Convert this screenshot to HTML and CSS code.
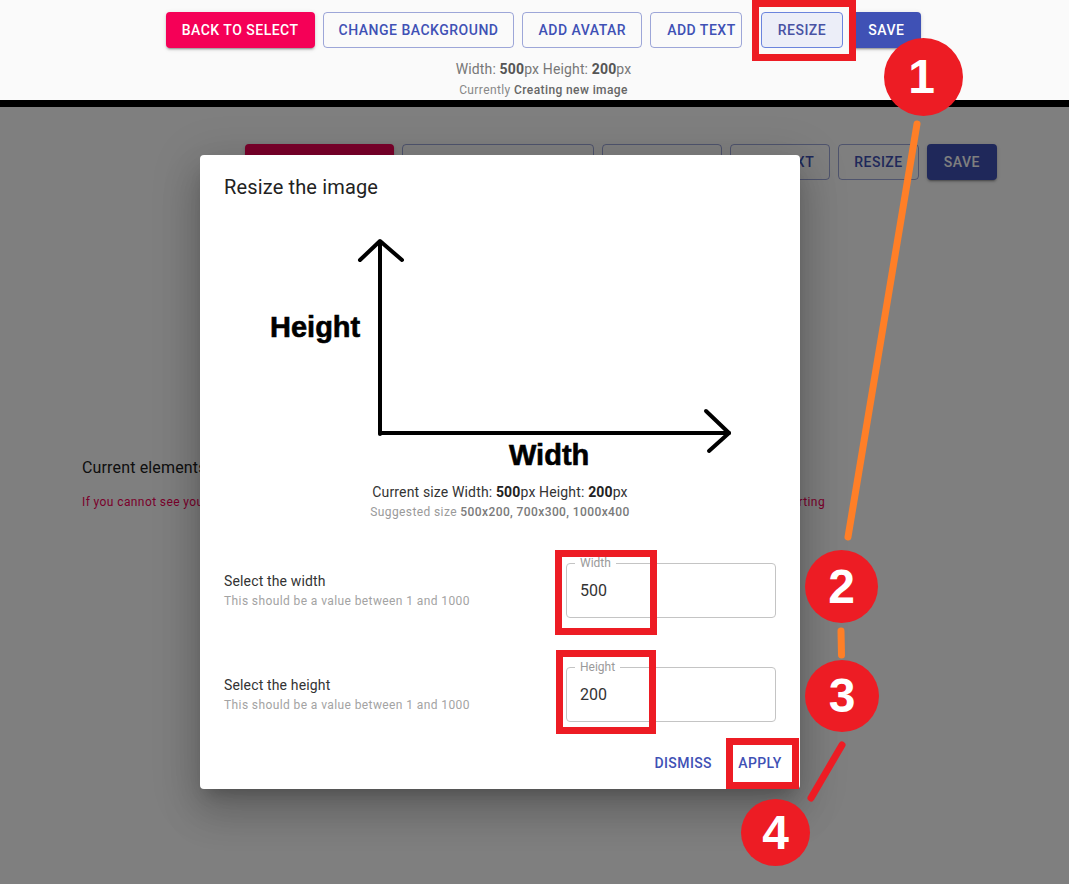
FILE: index.html
```html
<!DOCTYPE html>
<html lang="en">
<head>
<meta charset="utf-8">
<title>Resize the image</title>
<link rel="stylesheet" href="styles.css">
</head>
<body>
<div class="shot">
  <header class="toolbar">
    <div class="btn-row">
      <button class="btn btn-pink">Back to select</button>
      <button class="btn btn-outline">Change background</button>
      <button class="btn btn-outline">Add avatar</button>
      <button class="btn btn-outline btn-tight">Add text</button>
      <button class="btn btn-outline btn-active">Resize</button>
      <button class="btn btn-blue">Save</button>
    </div>
    <div class="dims">Width: <b>500</b>px Height: <b>200</b>px</div>
    <div class="status">Currently <b>Creating new image</b></div>
  </header>
  <div class="divider"></div>

  <section class="scene">
    <div class="page">
      <div class="btn-row page-row">
        <button class="btn btn-pink">Back to select</button>
        <button class="btn btn-outline">Change background</button>
        <button class="btn btn-outline">Add avatar</button>
        <button class="btn btn-outline">Add text</button>
        <button class="btn btn-outline">Resize</button>
        <button class="btn btn-blue">Save</button>
      </div>
      <div class="dims page-text">Width: <b>500</b>px Height: <b>200</b>px</div>
      <div class="status page-text">Currently <b>Creating new image</b></div>
      <div class="elements">
        <h2 class="elements-title">Current elements:</h2>
        <p class="elements-warn">If you cannot see your elements in the preview, they might be placed outside the image. Resize it or move them in before exporting</p>
      </div>
    </div>
    <div class="backdrop"></div>

    <div class="dialog">
      <h1 class="dialog-title">Resize the image</h1>
      <div class="dialog-content">
        <svg class="diagram" width="552" height="263" viewBox="224 219 552 263">
          <g fill="none" stroke="#000" stroke-width="4" stroke-linecap="round" stroke-linejoin="round">
            <path d="M380 434 L380 242"/>
            <path d="M360 260 L380 241 L402 260"/>
            <path d="M380 433 L729 433"/>
            <path d="M706 411 L729 433 L709 451"/>
          </g>
          <text x="270" y="337" class="axis-label">Height</text>
          <text x="509" y="465" class="axis-label">Width</text>
        </svg>
        <p class="size-now">Current size Width: <b>500</b>px Height: <b>200</b>px</p>
        <p class="size-hint">Suggested size <b>500x200, 700x300, 1000x400</b></p>

        <div class="field-row">
          <div class="field-text">
            <div class="field-label">Select the width</div>
            <div class="field-help">This should be a value between 1 and 1000</div>
          </div>
          <div class="field"><span class="field-legend">Width</span><span class="field-value">500</span></div>
        </div>

        <div class="field-row field-row-2">
          <div class="field-text">
            <div class="field-label">Select the height</div>
            <div class="field-help">This should be a value between 1 and 1000</div>
          </div>
          <div class="field"><span class="field-legend">Height</span><span class="field-value">200</span></div>
        </div>
      </div>
      <div class="dialog-actions">
        <button class="text-btn">Dismiss</button>
        <button class="text-btn">Apply</button>
      </div>
    </div>
  </section>

  <svg class="connectors" width="1069" height="884" viewBox="0 0 1069 884">
    <g stroke-width="7" stroke-linecap="round" fill="none">
      <line x1="917" y1="124" x2="848" y2="537" stroke="#ff7f27"/>
      <line x1="841" y1="631" x2="841.5" y2="655" stroke="#ff7f27"/>
      <line x1="842" y1="745" x2="811" y2="798" stroke="#ed1c24"/>
    </g>
  </svg>

  <div class="mark mark-resize"></div>
  <div class="mark mark-width"></div>
  <div class="mark mark-height"></div>
  <div class="mark mark-apply"></div>

  <div class="step step-1">1</div>
  <div class="step step-2">2</div>
  <div class="step step-3">3</div>
  <div class="step step-4">4</div>
</div>
</body>
</html>
```

FILE: styles.css
```css
* { box-sizing: border-box; }
html, body { margin: 0; padding: 0; }
body {
  font-family: Roboto, "Noto Sans", "Liberation Sans", sans-serif;
  background: #808080;
  width: 1069px;
  height: 884px;
  overflow: hidden;
}
.shot {
  position: relative;
  width: 1069px;
  height: 884px;
  overflow: hidden;
}

/* ---------- toolbar ---------- */
.toolbar {
  height: 100px;
  background: #fafafa;
  padding: 12px 0 0 18px;
  text-align: center;
}
.btn-row {
  display: flex;
  justify-content: center;
  gap: 8px;
}
.btn {
  font-family: Roboto, sans-serif;
  font-size: 14px;
  font-weight: 500;
  letter-spacing: 0.5px;
  text-transform: uppercase;
  height: 36px;
  line-height: 24px;
  padding: 6px 16px;
  border-radius: 4px;
  border: 0;
  white-space: nowrap;
}
.btn-pink {
  background: #f50057;
  color: #fff;
  box-shadow: 0 3px 1px -2px rgba(0,0,0,.2), 0 2px 2px 0 rgba(0,0,0,.14), 0 1px 5px 0 rgba(0,0,0,.12);
}
.btn-blue {
  background: #3f51b5;
  color: #fff;
  padding: 6px 17px;
  box-shadow: 0 3px 1px -2px rgba(0,0,0,.2), 0 2px 2px 0 rgba(0,0,0,.14), 0 1px 5px 0 rgba(0,0,0,.12);
}
.btn-outline {
  background: transparent;
  color: #3f51b5;
  border: 1px solid rgba(63,81,181,.5);
  padding: 5px 15px;
}
.btn-tight { padding: 5px 5px 5px 16px; }
.btn-active {
  margin-left: 11px;
  padding: 5px 16px;
  background: #eceef8;
  border-color: #6b84dd;
  color: #4852a4;
}
.dims {
  font-size: 14px;
  line-height: 20px;
  letter-spacing: 0.15px;
  color: #777;
  margin-top: 11px;
}
.dims b { color: #555; font-weight: 700; }
.status {
  font-size: 12px;
  line-height: 18px;
  letter-spacing: 0.4px;
  color: #888;
  margin-top: 2px;
}
.status b { color: #666; font-weight: 500; }
.divider { height: 7px; background: #000; }

/* ---------- background page ---------- */
.scene {
  position: relative;
  height: 777px;
  background: #fff;
}
.page { padding-top: 37px; }
.page-row { padding-left: 173px; gap: 8px; }
.page-text { padding-left: 173px; text-align: center; }
.elements { margin-top: 225px; padding-left: 82px; }
.elements-title {
  margin: 0;
  font-size: 16px;
  line-height: 24px;
  letter-spacing: 0.15px;
  font-weight: 400;
  color: #212121;
}
.elements-warn {
  margin: 13px 0 0;
  font-size: 12px;
  line-height: 18px;
  letter-spacing: 0.4px;
  color: #f50057;
  white-space: nowrap;
}
.backdrop {
  position: absolute;
  inset: 0;
  background: rgba(0,0,0,.5);
}

/* ---------- dialog ---------- */
.dialog {
  position: absolute;
  left: 200px;
  top: 48px;
  width: 600px;
  background: #fff;
  border-radius: 4px;
  box-shadow: 0 11px 15px -7px rgba(0,0,0,.2), 0 24px 38px 3px rgba(0,0,0,.14), 0 9px 46px 8px rgba(0,0,0,.12);
}
.dialog-title {
  margin: 0;
  padding: 16px 24px;
  font-size: 20px;
  line-height: 32px;
  letter-spacing: 0.15px;
  font-weight: 400;
  color: #222;
}
.dialog-content { padding: 0 24px 15px; }
.diagram { display: block; }
.axis-label {
  font-family: "Liberation Sans", Arial, sans-serif;
  font-weight: 700;
  font-size: 29px;
  fill: #000;
  stroke: #000;
  stroke-width: 0.6px;
}
.size-now {
  margin: 0;
  text-align: center;
  font-size: 14px;
  line-height: 20px;
  letter-spacing: 0.15px;
  color: #333;
}
.size-now b { color: #222; }
.size-hint {
  margin: 0;
  text-align: center;
  font-size: 12px;
  line-height: 20px;
  letter-spacing: 0.4px;
  color: #9a9a9a;
}
.size-hint b { font-weight: 500; color: #7a7a7a; }
.field-row {
  display: flex;
  justify-content: space-between;
  align-items: center;
  margin-top: 41px;
}
.field-row-2 { margin-top: 49px; }
.field-label {
  font-size: 14px;
  line-height: 20px;
  letter-spacing: 0.15px;
  color: #333;
}
.field-help {
  font-size: 12px;
  line-height: 20px;
  letter-spacing: 0.4px;
  color: #a3a3a3;
}
.field {
  position: relative;
  width: 210px;
  height: 55px;
  border: 1px solid #c4c4c4;
  border-radius: 4px;
  display: flex;
  align-items: center;
  padding-left: 13px;
}
.field-legend {
  position: absolute;
  top: -8px;
  left: 8px;
  padding: 0 5px;
  background: #fff;
  font-size: 12px;
  line-height: 14px;
  color: #9a9a9a;
}
.field-value {
  font-size: 16px;
  color: #333;
}
.dialog-actions {
  display: flex;
  justify-content: flex-end;
  gap: 8px;
  padding: 8px;
}
.text-btn {
  font-family: Roboto, sans-serif;
  font-size: 14px;
  font-weight: 500;
  letter-spacing: 0.4px;
  text-transform: uppercase;
  color: #3f51b5;
  background: transparent;
  border: 0;
  height: 36px;
  line-height: 24px;
  padding: 6px 8px;
  min-width: 64px;
}

/* ---------- annotations ---------- */
.connectors {
  position: absolute;
  left: 0;
  top: 0;
  z-index: 5;
}
.mark {
  position: absolute;
  border: 7px solid #ed1c24;
  z-index: 6;
}
.mark-resize { left: 752px; top: 0; width: 104px; height: 61px; }
.mark-width { left: 555px; top: 550px; width: 102px; height: 85px; }
.mark-height { left: 556px; top: 650px; width: 100px; height: 84px; }
.mark-apply { left: 726px; top: 738px; width: 73px; height: 51px; }

.step {
  position: absolute;
  z-index: 7;
  border-radius: 50%;
  background: #ed1c24;
  color: #fff;
  font-family: "Liberation Sans", Arial, sans-serif;
  font-weight: 700;
  font-size: 48px;
  line-height: 48px;
  display: flex;
  align-items: center;
  justify-content: center;
}
.step-1 { left: 884px; top: 38px; width: 79px; height: 78px; padding-right: 4px; }
.step-2 { left: 805px; top: 550px; width: 73px; height: 73px; }
.step-3 { left: 805px; top: 660px; width: 74px; height: 72px; }
.step-4 { left: 741px; top: 799px; width: 69px; height: 67px; }
```
